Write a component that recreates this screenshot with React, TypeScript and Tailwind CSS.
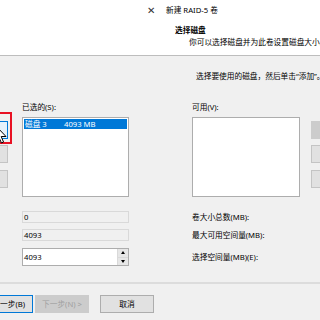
import React from 'react';

function SideButton({ active, className = '' }: { active?: boolean; className?: string }) {
  return (
    <div
      className={`h-[18px] border ${
        active ? 'border-[#0078d7] bg-[#e5f1fb]' : 'border-[#c4c4c4] bg-[#e1e1e1]'
      } ${className}`}
    />
  );
}

function ListBox({ children }: { children?: React.ReactNode }) {
  return (
    <div className="mt-[5px] h-[80px] border border-[#adadad] bg-white p-px">{children}</div>
  );
}

export default function App() {
  return (
    <div className="relative w-[320px] h-[320px] overflow-hidden bg-[#f0f0f0] text-[7.7px] leading-[10px] text-black font-['Noto_Sans','Noto_Sans_CJK_SC',sans-serif]">
      {/* Header */}
      <div className="h-[56px] bg-white border-b border-[#bdbdbd]">
        <div className="flex items-center h-[20px] pl-[147px]">
          <span className="w-[19px] text-[10px] text-[#333]">✕</span>
          <span>新建 RAID-5 卷</span>
        </div>
        <div className="pl-[175px] mt-[5px] font-bold">选择磁盘</div>
        <div className="pl-[189px] mt-[2px] whitespace-nowrap">你可以选择磁盘并为此卷设置磁盘大小。</div>
      </div>

      {/* Body */}
      <div className="pl-[196px] pt-[15px] whitespace-nowrap">选择要使用的磁盘，然后单击“添加”。</div>

      <div className="flex mt-[21px]">
        <div className="relative w-[22px] shrink-0 pt-[19px]">
          <SideButton active className="-ml-[40px] w-[48px]" />
          <SideButton className="-ml-[40px] w-[48px] mt-[6px]" />
          <SideButton className="-ml-[40px] w-[48px] mt-[7px]" />
          {/* annotation + cursor */}
          <div className="absolute -left-[4px] top-[10px] w-[16px] h-[32px] border-2 border-[#e81123]" />
          <svg className="absolute -left-[5px] top-[23px]" width="12" height="19" viewBox="0 0 12 19">
            <path d="M0.5 0.5 L0.5 16 L4 12.5 L6.5 18 L8.5 17 L6.2 11.5 L11 11.5 Z" fill="#fff" stroke="#000" strokeWidth="1" />
          </svg>
        </div>

        <div className="w-[107px] shrink-0">
          <div className="h-[10px]">已选的(S):</div>
          <ListBox>
            <div className="flex h-[10px] bg-[#0078d7] text-white">
              <span className="w-[40px] pl-px">磁盘 3</span>
              <span>4093 MB</span>
            </div>
          </ListBox>
        </div>

        <div className="w-[108px] shrink-0 ml-[63px]">
          <div className="h-[10px]">可用(V):</div>
          <ListBox />
        </div>

        <div className="ml-[11px] pt-[19px] w-[30px] shrink-0">
          <div className="h-[18px] bg-[#cccccc]" />
          <SideButton className="mt-[6px]" />
          <SideButton className="mt-[7px]" />
        </div>
      </div>

      {/* Size fields */}
      <div className="mt-[14px]">
        <div className="flex items-center h-[12px]">
          <div className="w-[22px] shrink-0" />
          <div className="w-[107px] shrink-0 h-full border border-[#d9d9d9] bg-[#f0f0f0] pl-px leading-[10px]">0</div>
          <div className="ml-[63px] whitespace-nowrap">卷大小总数(MB):</div>
        </div>
        <div className="flex items-center h-[12px] mt-[6px]">
          <div className="w-[22px] shrink-0" />
          <div className="w-[107px] shrink-0 h-full border border-[#d9d9d9] bg-[#f0f0f0] pl-px leading-[10px]">4093</div>
          <div className="ml-[63px] whitespace-nowrap">最大可用空间量(MB):</div>
        </div>
        <div className="flex items-center h-[18px] mt-[7px]">
          <div className="w-[22px] shrink-0" />
          <div className="flex w-[107px] shrink-0 h-full border border-[#adadad] bg-white">
            <div className="flex-1 pl-px pt-[3px]">4093</div>
            <div className="flex flex-col w-[11px] border-l border-[#d9d9d9] bg-[#f0f0f0]">
              <div className="flex-1 flex items-center justify-center border-b border-[#d9d9d9] bg-[#e6e6e6]">
                <span className="w-0 h-0 border-x-[2px] border-x-transparent border-b-[3px] border-b-black" />
              </div>
              <div className="flex-1 flex items-center justify-center bg-[#e6e6e6]">
                <span className="w-0 h-0 border-x-[2px] border-x-transparent border-t-[3px] border-t-black" />
              </div>
            </div>
          </div>
          <div className="ml-[63px] whitespace-nowrap">选择空间量(MB)(E):</div>
        </div>
      </div>

      {/* Footer */}
      <div className="mt-[16px] border-t-2 border-[#dcdcdc] pt-[11px] flex">
        <div className="-ml-[22px] w-[55px] shrink-0 h-[18px] flex items-center justify-end pr-[7px] border border-[#0078d7] bg-[#e1e1e1] whitespace-nowrap">
          上一步(B)
        </div>
        <div className="ml-[2px] w-[54px] shrink-0 h-[18px] flex items-center justify-center border border-[#cccccc] bg-[#cccccc] text-[#a0a0a0] whitespace-nowrap">
          下一步(N) &gt;
        </div>
        <div className="ml-[11px] w-[54px] shrink-0 h-[18px] flex items-center justify-center border border-[#adadad] bg-[#e1e1e1]">
          取消
        </div>
      </div>
    </div>
  );
}
